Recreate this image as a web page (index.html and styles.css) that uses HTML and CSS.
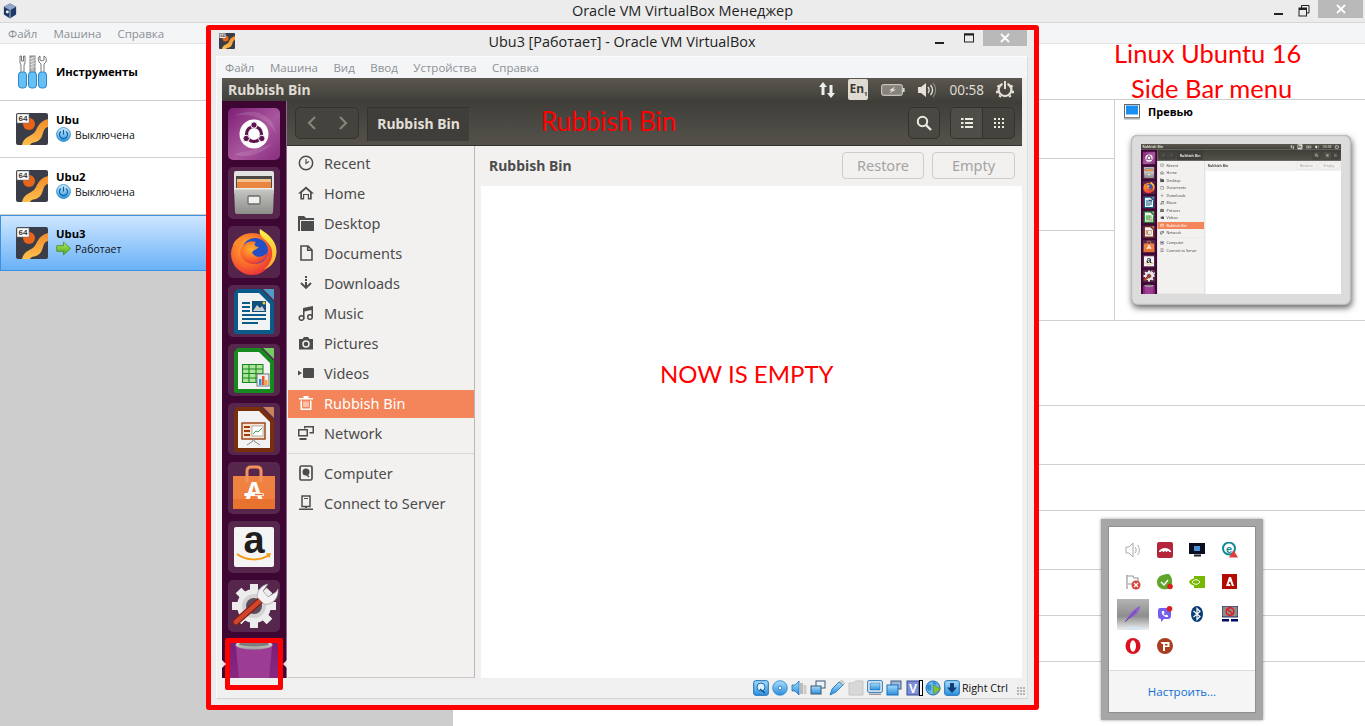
FILE: index.html
```html
<!DOCTYPE html>
<html lang="ru">
<head>
<meta charset="utf-8">
<title>Oracle VM VirtualBox Менеджер</title>
<link rel="stylesheet" href="styles.css">
</head>
<body>
<svg class="defs" aria-hidden="true">
  <defs>
    <linearGradient id="gOrange" x1="0" y1="0" x2="0" y2="1"><stop offset="0" stop-color="#f08a2c"/><stop offset="1" stop-color="#ffc04d"/></linearGradient>
    <linearGradient id="gPower" x1="0" y1="0" x2="0" y2="1"><stop offset="0" stop-color="#d4eefe"/><stop offset="1" stop-color="#2a97e0"/></linearGradient>
    <linearGradient id="gGreen" x1="0" y1="0" x2="0" y2="1"><stop offset="0" stop-color="#b8ec5e"/><stop offset="1" stop-color="#4aa51e"/></linearGradient>
    <linearGradient id="gDash" x1="0" y1="0" x2="1" y2="1"><stop offset="0" stop-color="#7d1f73"/><stop offset=".55" stop-color="#a9579f"/><stop offset="1" stop-color="#8a2c80"/></linearGradient>
    <linearGradient id="gDrawer" x1="0" y1="0" x2="0" y2="1"><stop offset="0" stop-color="#c9c9c6"/><stop offset="1" stop-color="#8d8d8a"/></linearGradient>
    <linearGradient id="gBag" x1="0" y1="0" x2="0" y2="1"><stop offset="0" stop-color="#ef8242"/><stop offset="1" stop-color="#f07f3e"/></linearGradient>
    <radialGradient id="gFox" cx=".4" cy=".35" r=".75"><stop offset="0" stop-color="#ffb52e"/><stop offset=".6" stop-color="#f9622d"/><stop offset="1" stop-color="#e2243c"/></radialGradient>
    <linearGradient id="gYellow" x1="0" y1="0" x2="0" y2="1"><stop offset="0" stop-color="#fff04a"/><stop offset="1" stop-color="#ffa92c"/></linearGradient>
    <linearGradient id="gBin" x1="0" y1="0" x2="0" y2="1"><stop offset="0" stop-color="#7c1d75"/><stop offset="1" stop-color="#8f2a86"/></linearGradient>
    <linearGradient id="gRim" x1="0" y1="0" x2="0" y2="1"><stop offset="0" stop-color="#eeeeee"/><stop offset="1" stop-color="#9a9a9a"/></linearGradient>
    <linearGradient id="gBlueIcon" x1="0" y1="0" x2="0" y2="1"><stop offset="0" stop-color="#a9dcfb"/><stop offset="1" stop-color="#2b8fdc"/></linearGradient>

    <symbol id="i-vm" viewBox="0 0 32 32">
      <rect width="32" height="32" rx="2" fill="#3a3d47"/>
      <path d="M6 32C8 24 13 24 18 20C22 16 21 9 32 6V14C27 15 28 20 25 25C21 31 16 28 14 32Z" fill="url(#gOrange)"/>
      <circle cx="13" cy="11" r="6" fill="#e8641b"/>
      <rect x="1" y="1" width="12" height="9" fill="#fff" stroke="#777" stroke-width=".6"/>
      <text x="7" y="8.4" class="svg-64">64</text>
    </symbol>
    <symbol id="i-power" viewBox="0 0 16 16">
      <circle cx="8" cy="8" r="7.4" fill="url(#gPower)" stroke="#1c7fc6" stroke-width=".8"/>
      <path d="M5.2 4.8A4.3 4.3 0 1 0 10.8 4.8M8 2.8V8" fill="none" stroke="#0e5c99" stroke-width="1.2"/>
    </symbol>
    <symbol id="i-run" viewBox="0 0 16 16">
      <path d="M8 1.2L15.5 8L8 14.8V11H.8V5H8Z" fill="url(#gGreen)" stroke="#3f8a1c" stroke-width=".8"/>
    </symbol>
    <symbol id="i-tools" viewBox="0 0 30 34">
      <path d="M3 1H4.5V6H6.5V1H8V8L7 10V18H4V10L3 8Z" fill="#fff" stroke="#555" stroke-width=".8"/>
      <rect x="13" y="1" width="5" height="17" fill="#bbb" stroke="#666" stroke-width=".8"/>
      <path d="M13 4L18 2M13 7L18 5M13 10L18 8M13 13L18 11" stroke="#eee" stroke-width=".8"/>
      <path d="M23 1V5L25 6L27 5V1C29 2 30 4 29 7L27 9V18H24V9L22 7C21 4 21 2 23 1Z" fill="#fff" stroke="#555" stroke-width=".8"/>
      <rect x="1.500" y="17" width="8" height="16" rx="3" fill="#67c0f5" stroke="#2a86c9"/>
      <rect x="11.500" y="17" width="8" height="16" rx="3" fill="#67c0f5" stroke="#2a86c9"/>
      <rect x="21.500" y="17" width="8" height="16" rx="3" fill="#67c0f5" stroke="#2a86c9"/>
    </symbol>
    <symbol id="i-hostlogo" viewBox="0 0 16 18">
      <path d="M8 .5L15 4V13L8 17.500L1 13V4Z" fill="#1f3a68"/>
      <path d="M8 .5L15 4L8 8L1 4Z" fill="#8fa6c8"/>
      <path d="M8 8V17.500" stroke="#c7d3e6" stroke-width="1"/>
      <circle cx="5" cy="10" r="1.600" fill="#fff"/>
    </symbol>
    <symbol id="i-min" viewBox="0 0 12 12"><rect x="1" y="8" width="9" height="2" fill="currentColor"/></symbol>
    <symbol id="i-max" viewBox="0 0 12 12"><rect x="1.500" y="2" width="9" height="8" fill="none" stroke="currentColor"/><rect x="1" y="1.500" width="10" height="2" fill="currentColor"/></symbol>
    <symbol id="i-restore" viewBox="0 0 12 12"><path d="M3.500 3V.5H11V8H8.500" fill="none" stroke="currentColor"/><rect x="1" y="3" width="7.500" height="8" fill="none" stroke="currentColor"/><rect x="1" y="3" width="7.500" height="2" fill="currentColor"/></symbol>
    <symbol id="i-close" viewBox="0 0 12 12"><path d="M2 2L10 10M10 2L2 10" stroke="currentColor" stroke-width="1.800"/></symbol>

    <symbol id="p-net" viewBox="0 0 18 18"><path d="M5 1L9 6H6.500V14H3.500V6H1ZM13 17L9 12H11.500V4H14.500V12H17Z" fill="#eee"/></symbol>
    <symbol id="p-bat" viewBox="0 0 24 14"><rect x=".7" y="1.700" width="20.600" height="10.600" rx="1.500" fill="#85837b" stroke="#dfdbd2"/><rect x="22" y="5" width="1.600" height="4" fill="#dfdbd2"/><path d="M14 3.500L8 7.500L11 7.500L8 10.500L15 6.500L12 6.500Z" fill="#e8e5dd"/></symbol>
    <symbol id="p-vol" viewBox="0 0 20 18"><path d="M1 6H4L9 2V16L4 12H1Z" fill="#e5e1d8"/><path d="M11 6C12.500 8 12.500 10 11 12M13.500 4C16 7 16 11 13.500 14" fill="none" stroke="#e5e1d8" stroke-width="1.300"/><path d="M16 2C19.500 6 19.500 12 16 16" fill="none" stroke="#8b8880" stroke-width="1.200"/></symbol>
    <symbol id="p-gear" viewBox="0 0 18 18"><path d="M6.200 1.800A7.500 7.500 0 1 0 11.800 1.800L11.200 4A5.200 5.200 0 1 1 6.800 4Z" fill="#e5e1d8"/><rect x="8" y="0" width="2" height="8" fill="#e5e1d8"/><path d="M1.500 4.500L3 6M16.500 4.500L15 6M0 11H2M18 11H16M3.500 16L4.500 14.500M14.500 16L13.500 14.500" stroke="#e5e1d8" stroke-width="2.400"/></symbol>
    <symbol id="t-back" viewBox="0 0 12 16"><path d="M9 2L3 8L9 14" fill="none" stroke="currentColor" stroke-width="2"/></symbol>
    <symbol id="t-fwd" viewBox="0 0 12 16"><path d="M3 2L9 8L3 14" fill="none" stroke="currentColor" stroke-width="2"/></symbol>
    <symbol id="t-search" viewBox="0 0 16 16"><circle cx="6.500" cy="6.500" r="4.700" fill="none" stroke="#eeeae2" stroke-width="2"/><path d="M10 10L15 15" stroke="#eeeae2" stroke-width="2.400"/></symbol>
    <symbol id="t-list" viewBox="0 0 12 12"><path d="M0 1H2.500V3H0ZM4 1H12V3H4ZM0 5H2.500V7H0ZM4 5H12V7H4ZM0 9H2.500V11H0ZM4 9H12V11H4Z" fill="#eeeae2"/></symbol>
    <symbol id="t-grid" viewBox="0 0 12 12"><path d="M1 1H3V3H1ZM5 1H7V3H5ZM9 1H11V3H9ZM1 5H3V7H1ZM5 5H7V7H5ZM9 5H11V7H9ZM1 9H3V11H1ZM5 9H7V11H5ZM9 9H11V11H9Z" fill="#eeeae2"/></symbol>

    <symbol id="s-recent" viewBox="0 0 16 16"><circle cx="8" cy="8" r="6.700" fill="none" stroke="currentColor" stroke-width="1.500"/><path d="M8 4V8.500L11 6.500" fill="none" stroke="currentColor" stroke-width="1.200"/></symbol>
    <symbol id="s-home" viewBox="0 0 16 16"><path d="M8 1.500L16 8.500H13.700V14.500H9.800V10H6.200V14.500H2.300V8.500H0Z" fill="currentColor"/><path d="M8 4L12 7.500V13H11V9H5V13H4V7.500Z" fill="#f2f1f0"/></symbol>
    <symbol id="s-folder" viewBox="0 0 16 16"><path d="M0 1H6L8 3H16V16H0Z" fill="currentColor"/><path d="M2 5H16V6H3V16H2Z" fill="#f2f1f0"/></symbol>
    <symbol id="s-doc" viewBox="0 0 16 16"><path d="M3 1H10L14 5V15H3ZM9.700 1.500V5.300H13.500" fill="none" stroke="currentColor" stroke-width="1.600"/></symbol>
    <symbol id="s-down" viewBox="0 0 16 16"><path d="M7 1H9V3H7ZM7 4H9V6H7ZM7 7H9V12H7Z" fill="currentColor"/><path d="M3 8L8 13L13 8" fill="none" stroke="currentColor" stroke-width="1.800"/></symbol>
    <symbol id="s-music" viewBox="0 0 16 16"><path d="M5 3L15 1V12H13.500V5L6.500 6.400V14H5Z" fill="currentColor"/><circle cx="3.500" cy="13" r="2.300" fill="none" stroke="currentColor" stroke-width="1.500"/><circle cx="12" cy="12" r="2.300" fill="none" stroke="currentColor" stroke-width="1.500"/></symbol>
    <symbol id="s-camera" viewBox="0 0 16 16"><path d="M1 4H4.500L6 2H10L11.500 4H15V14.500H1Z" fill="currentColor"/><circle cx="8" cy="9" r="3" fill="none" stroke="#f2f1f0" stroke-width="1.500"/></symbol>
    <symbol id="s-video" viewBox="0 0 16 16"><rect x="5" y="3" width="11" height="10" rx="1" fill="currentColor"/><path d="M0 5.500L4 8L0 10.500Z" fill="currentColor"/></symbol>
    <symbol id="s-trash" viewBox="0 0 16 16"><path d="M1 3H15V4.500H1ZM5.500 1H10.500V3H5.500ZM2.500 5.500H13.500V15H2.500ZM4 5.500V13.600H12V5.500Z" fill="currentColor" fill-rule="evenodd"/><path d="M6 6.500V12M8 6.500V12M10 6.500V12" stroke="currentColor"/></symbol>
    <symbol id="s-net" viewBox="0 0 16 16"><path d="M0 4H10V11.500H0ZM1.500 5.500V10H8.500V5.500ZM1.500 13H8.500V15H1.500Z" fill="currentColor" fill-rule="evenodd"/><path d="M6 1H16V8.500H11.500V7H14.500V2.500H7.500V3.500H6Z" fill="currentColor"/></symbol>
    <symbol id="s-comp" viewBox="0 0 16 16"><rect x="2" y="1" width="12" height="14" rx="1.500" fill="none" stroke="currentColor" stroke-width="1.700"/><circle cx="8" cy="7" r="3.500" fill="currentColor"/><path d="M7 8L11 12" stroke="currentColor" stroke-width="1.500"/></symbol>
    <symbol id="s-server" viewBox="0 0 16 16"><rect x="4" y="1" width="8" height="10.500" fill="none" stroke="currentColor" stroke-width="1.500"/><path d="M6 3H10V4H6ZM7 11H9V13H7ZM1 13.500H15V15H1Z" fill="currentColor"/></symbol>

    <symbol id="l-dash" viewBox="0 0 52 52">
      <rect width="52" height="52" rx="5" fill="url(#gDash)"/>
      <path d="M6 8C24 -2 46 6 48 26C42 12 24 4 6 8ZM6 46C20 52 36 44 44 36C34 40 16 44 6 46Z" fill="#fff" opacity=".12"/>
      <circle cx="26" cy="26" r="14.500" fill="#fff"/>
      <circle cx="26" cy="26" r="7.500" fill="none" stroke="#5c154f" stroke-width="3.200"/>
      <circle cx="26" cy="17" r="3.200" fill="#5c154f" stroke="#fff"/><circle cx="18.200" cy="30.500" r="3.200" fill="#5c154f" stroke="#fff"/><circle cx="33.800" cy="30.500" r="3.200" fill="#5c154f" stroke="#fff"/>
    </symbol>
    <symbol id="l-files" viewBox="0 0 52 52">
      <rect width="52" height="52" rx="5" fill="#fff" opacity=".13"/>
      <path d="M6 6Q6 4 8 4H44Q46 4 46 6V26H6Z" fill="#e2e2e0"/>
      <rect x="8" y="9" width="36" height="16" fill="#4b4a46"/>
      <rect x="9" y="12" width="34" height="3" fill="#f4c08c"/><rect x="9" y="15" width="34" height="6" fill="#e9853f"/>
      <path d="M6 21H46L45 45Q45 47 43 47H9Q7 47 7 45Z" fill="url(#gDrawer)"/>
      <rect x="6" y="21" width="40" height="1.500" fill="#ecece9"/>
      <rect x="20" y="29" width="12" height="8" rx="1" fill="#f0f0ee" stroke="#6b6b68" stroke-width="1.300"/>
    </symbol>
    <symbol id="l-fox" viewBox="0 0 52 52">
      <rect width="52" height="52" rx="5" fill="#fff" opacity=".12"/>
      <circle cx="24" cy="28" r="21" fill="url(#gFox)"/>
      <path d="M32 3C30 10 36 12 41 18C47 25 44 38 36 43C42 42 48 36 48.500 26C49 15 40 8 32 3Z" fill="url(#gYellow)"/>
      <circle cx="27" cy="25" r="13" fill="#2450c6"/>
      <path d="M14 21C18 16 22 14 28 16C24 20 30 21 31 21C27 25 26 23 24 27C30 34 38 30 40 25C39 37 24 42 16 34C11 29 12 24 14 21Z" fill="url(#gFox)"/>
      <path d="M5 19C7 14 10 12 15 10C12 14 12 17 14 20Z" fill="#ff8a2a"/>
    </symbol>
    <symbol id="l-writer" viewBox="0 0 52 52">
      <rect width="52" height="52" rx="5" fill="#fff" opacity=".13"/>
      <path d="M8 6Q8 4 10 4H33L46 17V47Q46 49 44 49H10Q6 49 6 47V8Z" fill="#0a5a8a"/>
      <path d="M35 4H45Q46 4 46 5V15Z" fill="#4d9dc9"/>
      <path d="M10 8H31L42 19V45H10Z" fill="#f2f2f2"/>
      <path d="M14 17H22V19H14ZM14 21H22V23H14ZM14 25H22V27H14ZM14 29H38V31H14ZM14 33H38V35H14ZM14 37H30V39H14Z" fill="#0a5a8a"/>
      <rect x="24" y="16" width="14" height="11" fill="#104e7c"/><path d="M25 26L29 20L32 23L34 21L37 26Z" fill="#cfcfcf"/><circle cx="36" cy="18" r="1.500" fill="#f5c842"/>
    </symbol>
    <symbol id="l-calc" viewBox="0 0 52 52">
      <rect width="52" height="52" rx="5" fill="#fff" opacity=".13"/>
      <path d="M8 6Q8 4 10 4H33L46 17V47Q46 49 44 49H10Q6 49 6 47V8Z" fill="#168a1e"/>
      <path d="M35 4H45Q46 4 46 5V15Z" fill="#70cf62"/>
      <path d="M10 8H31L42 19V45H10Z" fill="#f2f2f2"/>
      <rect x="14" y="20" width="21" height="19" fill="#aee59a"/>
      <path d="M14.500 20V39M21 20V39M28 20V39M35 20V39M14 20.500H35M14 25H35M14 29.500H35M14 34H35M14 38.500H35" stroke="#168a1e" stroke-width="1.100"/>
      <rect x="29" y="30" width="12" height="12" fill="#eee" stroke="#777"/>
      <rect x="31" y="35" width="2.500" height="6" fill="#2c8fe0"/><rect x="34" y="32" width="2.500" height="9" fill="#e8562a"/><rect x="37" y="36" width="2.500" height="5" fill="#f2a42c"/>
    </symbol>
    <symbol id="l-impress" viewBox="0 0 52 52">
      <rect width="52" height="52" rx="5" fill="#fff" opacity=".13"/>
      <path d="M8 6Q8 4 10 4H33L46 17V47Q46 49 44 49H10Q6 49 6 47V8Z" fill="#7a2f0c"/>
      <path d="M35 4H45Q46 4 46 5V15Z" fill="#c7845a"/>
      <path d="M10 8H31L42 19V45H10Z" fill="#f2f2f2"/>
      <rect x="14" y="20" width="23" height="16" fill="#f6e3d2" stroke="#9c3d10" stroke-width="1.400"/>
      <path d="M16 23H22V25H16ZM16 27H22V29H16ZM16 31H22V33H16Z" fill="#9c3d10"/><rect x="24" y="23" width="11" height="10" fill="#fff" stroke="#888" stroke-width=".6"/><path d="M25 31L28 28L30 29L34 25" fill="none" stroke="#3aa13a"/>
      <path d="M25 36V38L19 42M26 36V38L32 42" fill="none" stroke="#888"/>
    </symbol>
    <symbol id="l-store" viewBox="0 0 52 52">
      <rect width="52" height="52" rx="5" fill="#fff" opacity=".13"/>
      <path d="M5 14H47V47H5Z" fill="url(#gBag)"/>
      <path d="M5 37H47V47H5Z" fill="#e8732f"/>
      <path d="M19 20V9Q19 5 23 5H29Q33 5 33 9V20" fill="none" stroke="#f0935e" stroke-width="3"/>
      <text x="26" y="37" class="svg-store">A</text>
      <rect x="16" y="31" width="20" height="3" rx="1.500" fill="#fff"/><rect x="27" y="31.800" width="8" height="1.400" fill="#e8732f"/>
    </symbol>
    <symbol id="l-amazon" viewBox="0 0 52 52">
      <rect width="52" height="52" rx="5" fill="#fff" opacity=".13"/>
      <rect x="6" y="6" width="40" height="40" rx="2" fill="#f4f4f4"/>
      <text x="26" y="32" class="svg-amazon">a</text>
      <path d="M9 33C18 40 32 40 41 34" fill="none" stroke="#f39a12" stroke-width="2"/><path d="M38 32.500L43 32L41.500 37Z" fill="#f39a12"/>
    </symbol>
    <symbol id="l-settings" viewBox="0 0 52 52">
      <rect width="52" height="52" rx="5" fill="#fff" opacity=".13"/>
      <path d="M26 4V48M4 26H48M10.500 10.500L41.500 41.500M41.500 10.500L10.500 41.500" stroke="#ececec" stroke-width="8"/>
      <circle cx="26" cy="26" r="17" fill="#ececec"/>
      <circle cx="26" cy="26" r="12" fill="#d2d2d2"/>
      <circle cx="26" cy="26" r="8" fill="#5e4a5a"/>
      <path d="M8 42L34 19" stroke="#7e1e12" stroke-width="7" stroke-linecap="round"/>
      <path d="M8 42L34 19" stroke="#d0452c" stroke-width="4.500" stroke-linecap="round"/>
      <path d="M40 4L35 11L40 17L48 12L50 9C51 18 44 26 36 24L29 17C29 10 34 5 40 4Z" fill="#f2f2f2" stroke="#9a9a9a" stroke-width=".7"/>
    </symbol>
    <symbol id="l-bin" viewBox="0 0 52 52">
      <rect x="2" y="4" width="48" height="48" fill="url(#gBin)"/>
      <path d="M8 8H44L40 52H12Z" fill="#9c3d93"/>
      <ellipse cx="26" cy="6" rx="18.500" ry="4.500" fill="url(#gRim)"/>
      <ellipse cx="26" cy="5" rx="15" ry="2.500" fill="#7d7d7d"/>
    </symbol>

    <symbol id="b-hd" viewBox="0 0 16 16"><rect x=".7" y=".7" width="14.600" height="14.600" rx="2" fill="url(#gBlueIcon)" stroke="#1b6fb6"/><circle cx="8" cy="7" r="4" fill="#dff1fd" stroke="#1b6fb6"/><path d="M7 9L12 13" stroke="#134f85" stroke-width="1.300"/></symbol>
    <symbol id="b-cd" viewBox="0 0 16 16"><circle cx="8" cy="8" r="7.300" fill="url(#gBlueIcon)" stroke="#2b85cf" stroke-width=".8"/><circle cx="8" cy="8" r="1.800" fill="#fff" stroke="#1b6fb6" stroke-width=".8"/></symbol>
    <symbol id="b-audio" viewBox="0 0 16 16"><path d="M1 5H4L8 1V15L4 11H1Z" fill="url(#gBlueIcon)" stroke="#1b6fb6" stroke-width=".8"/><rect x="9" y="3" width="3" height="11" fill="#bbb"/><rect x="12.500" y="5" width="3" height="9" fill="#ccc"/></symbol>
    <symbol id="b-net" viewBox="0 0 16 16"><rect x="6" y="1" width="9" height="7" fill="#e9f3fb" stroke="#40566d"/><rect x="1" y="6" width="10" height="8" fill="url(#gBlueIcon)" stroke="#40566d"/></symbol>
    <symbol id="b-usb" viewBox="0 0 16 16"><path d="M1 15L3 9L10 2L14 5L7 12Z" fill="url(#gBlueIcon)" stroke="#1b6fb6" stroke-width=".8"/><path d="M10.500 1.500L13 .7L15.500 3L14.500 5Z" fill="#ddd" stroke="#999" stroke-width=".6"/></symbol>
    <symbol id="b-shared" viewBox="0 0 16 16"><path d="M1 3H6L7.500 1H15V15H1Z" fill="#d8d8d8" stroke="#c4c4c4"/></symbol>
    <symbol id="b-disp" viewBox="0 0 16 16"><rect x=".7" y=".7" width="14.600" height="11.600" rx="1" fill="#f4f8fb" stroke="#1b6fb6"/><rect x="3" y="3" width="10" height="7" fill="url(#gBlueIcon)" stroke="#1b6fb6" stroke-width=".6"/><rect x="2" y="13.500" width="12" height="1.500" fill="#999"/></symbol>
    <symbol id="b-cap" viewBox="0 0 16 16"><rect x="5" y="1" width="10" height="8" fill="#9fb6d6" stroke="#3e5a85"/><rect x="1" y="5" width="11" height="10" fill="url(#gBlueIcon)" stroke="#1b6fb6"/></symbol>
    <symbol id="b-cpu" viewBox="0 0 16 16"><rect x="2" y="1" width="12" height="14" fill="#7e8fd6" stroke="#35489a"/><text x="8" y="12.500" class="svg-v">V</text></symbol>
    <symbol id="b-globe" viewBox="0 0 16 16"><circle cx="8" cy="8" r="7" fill="#6cb7ea" stroke="#1b6fb6"/><path d="M2 5C5 3 7 6 6 9C5 12 3 11 2 8ZM8 2C11 2 12 4 11 5L8 4Z" fill="#2d8fd0"/><path d="M8 5L15.500 9L9 14Z" fill="#86c532" stroke="#4d8f1a" stroke-width=".6"/></symbol>
    <symbol id="b-arrow" viewBox="0 0 16 16"><rect x=".7" y=".7" width="14.600" height="14.600" rx="2" fill="url(#gBlueIcon)" stroke="#1b6fb6"/><path d="M6 3H10V7.500H13L8 13L3 7.500H6Z" fill="#123c78"/></symbol>
    <symbol id="h-preview" viewBox="0 0 16 16"><rect x=".5" y=".5" width="15" height="13" fill="#fff" stroke="#666"/><rect x="2" y="1.500" width="12" height="9" fill="#1b8ff0"/><rect x="0" y="13.500" width="16" height="2" fill="#aaa"/></symbol>

    <symbol id="y-speaker" viewBox="0 0 16 16"><path d="M1 5H4L8 1V15L4 11H1Z" fill="#fff" stroke="#aaa"/><path d="M10 5C11.500 7 11.500 9 10 11M12.500 3C15 6 15 10 12.500 13" fill="none" stroke="#aaa"/></symbol>
    <symbol id="y-red" viewBox="0 0 16 16"><rect width="16" height="16" rx="2" fill="#b5263a"/><path d="M2 9C5 5 11 5 14 9V10H2Z" fill="#fff"/><circle cx="5" cy="10" r="1" fill="#b5263a"/><circle cx="8" cy="10" r="1" fill="#b5263a"/><circle cx="11" cy="10" r="1" fill="#b5263a"/></symbol>
    <symbol id="y-mon" viewBox="0 0 16 16"><rect y="1" width="16" height="11" fill="#0a0f20"/><rect x="5" y="4" width="6" height="5" fill="#4a90d9"/><rect x="5" y="12.500" width="7" height="2" fill="#222"/></symbol>
    <symbol id="y-eset" viewBox="0 0 16 16"><circle cx="7" cy="6.500" r="6" fill="none" stroke="#0f8a96" stroke-width="2"/><text x="7" y="10.500" class="svg-e">e</text><path d="M11.500 8L16 15.500H7Z" fill="#e23d3d"/></symbol>
    <symbol id="y-flag" viewBox="0 0 16 16"><path d="M2 1V15M2 2H8L9 4H13V10H3" fill="#fff" stroke="#999" stroke-width="1.200"/><circle cx="11" cy="11" r="4.500" fill="#d6453d"/><path d="M9 9L13 13M13 9L9 13" stroke="#fff" stroke-width="1.300"/></symbol>
    <symbol id="y-leaf" viewBox="0 0 16 16"><path d="M0 8C0 2 6 0 12 0C16 4 16 10 13 14C8 17 0 15 0 8Z" fill="#5ea52a"/><path d="M4 8L7 11L11 6" fill="none" stroke="#fff" stroke-width="1.500"/><circle cx="13" cy="12.500" r="2.800" fill="#e01e1e"/></symbol>
    <symbol id="y-nv" viewBox="0 0 16 16"><rect x="5" y="2" width="11" height="12" fill="#76b900"/><path d="M0 8C3 3 9 3 12 8C9 13 3 13 0 8Z" fill="#76b900"/><path d="M3 8C5 5 9 5 11 8C9 11 5 11 3 8Z" fill="none" stroke="#fff"/></symbol>
    <symbol id="y-adobe" viewBox="0 0 16 16"><rect width="15" height="15" fill="#b30b00"/><path d="M4 12L7 3H9L12 12H10L8 7L6.500 10H8L8.500 12Z" fill="#fff"/></symbol>
    <symbol id="y-feather" viewBox="0 0 16 16"><path d="M0 16C3 10 8 3 15 0C15 6 9 11 3 13Z" fill="#8f5fd0"/><path d="M0 16L11 5" stroke="#5a2c9a" stroke-width=".8"/></symbol>
    <symbol id="y-viber" viewBox="0 0 16 16"><path d="M3 2H11Q14 2 14 5V10Q14 13 11 13H7L4 16V13Q1 13 1 10V5Q1 2 3 2Z" fill="#7360f2"/><path d="M5 5L7 5L7.500 7L6.500 8L8 9.500L9 8.500L11 9.500V11C7 11.500 4 8 5 5Z" fill="#fff"/><circle cx="12.500" cy="2.800" r="2.800" fill="#e01e1e"/></symbol>
    <symbol id="y-bt" viewBox="0 0 16 16"><ellipse cx="8" cy="8" rx="6" ry="8" fill="#0a3d76"/><path d="M4.500 5L11 10.500L8 13.500V2.500L11 5.500L4.500 11" fill="none" stroke="#fff" stroke-width="1.200"/></symbol>
    <symbol id="y-nonet" viewBox="0 0 16 16"><rect width="16" height="11" fill="#8d8d8d" stroke="#000a60" stroke-width=".8"/><circle cx="8" cy="5.500" r="3.800" fill="none" stroke="#e21a1a" stroke-width="1.500"/><path d="M5 3L11 8" stroke="#e21a1a" stroke-width="1.500"/><rect y="13" width="7" height="2.500" fill="#000a60"/><rect x="9" y="13" width="7" height="2.500" fill="#000a60"/></symbol>
    <symbol id="y-opera" viewBox="0 0 16 16"><ellipse cx="8" cy="8" rx="7.500" ry="8" fill="#d8101f"/><ellipse cx="8" cy="8" rx="3" ry="5.800" fill="#fff"/></symbol>
    <symbol id="y-p" viewBox="0 0 16 16"><circle cx="8" cy="8" r="8" fill="#a83d1f"/><path d="M3.500 4H12.500V9H8V13H6V6H5Z" fill="#fff"/><rect x="8" y="6" width="2.500" height="1.500" fill="#a83d1f"/></symbol>
  </defs>
</svg>

<div class="host">
  <header class="host-title">
    <svg class="host-logo"><use href="#i-hostlogo"/></svg>
    <span class="host-title-text">Oracle VM VirtualBox Менеджер</span>
    <div class="wincontrols">
      <svg class="wc wc-min"><use href="#i-min"/></svg>
      <svg class="wc wc-res"><use href="#i-restore"/></svg>
      <span class="wc-close"><svg class="wc"><use href="#i-close"/></svg></span>
    </div>
  </header>
  <nav class="menubar host-menu"><span>Файл</span><span>Машина</span><span>Справка</span></nav>
  <main class="host-body">
    <section class="vm-list">
      <div class="vm-row tools-row">
        <svg class="tools-icon"><use href="#i-tools"/></svg>
        <b class="vm-name">Инструменты</b>
      </div>
      <div class="vm-row">
        <svg class="vm-icon"><use href="#i-vm"/></svg>
        <div class="vm-info"><b class="vm-name">Ubu</b><span class="vm-state"><svg class="state-icon"><use href="#i-power"/></svg>Выключена</span></div>
      </div>
      <div class="vm-row">
        <svg class="vm-icon"><use href="#i-vm"/></svg>
        <div class="vm-info"><b class="vm-name">Ubu2</b><span class="vm-state"><svg class="state-icon"><use href="#i-power"/></svg>Выключена</span></div>
      </div>
      <div class="vm-row vm-selected">
        <svg class="vm-icon"><use href="#i-vm"/></svg>
        <div class="vm-info"><b class="vm-name">Ubu3</b><span class="vm-state"><svg class="state-icon"><use href="#i-run"/></svg>Работает</span></div>
      </div>
    </section>
    <section class="details">
      <div class="band band-top"></div>
      <div class="band-split">
        <div class="split-left">
          <div class="band band-59"></div>
          <div class="band band-72"></div>
        </div>
        <div class="preview">
          <h2 class="preview-head"><svg class="preview-icon"><use href="#h-preview"/></svg>Превью</h2>
          <div class="thumb">
            <div class="thumb-screen">
              <div class="thumb-scale">
                <div class="guest">
                  <div class="gpanel">
                    <b class="gpanel-title">Rubbish Bin</b>
                    <div class="gpanel-right">
                      <svg class="p-net"><use href="#p-net"/></svg><span class="p-en">En<sub>1</sub></span><svg class="p-bat"><use href="#p-bat"/></svg><svg class="p-vol"><use href="#p-vol"/></svg><span class="p-time">00:58</span><svg class="p-gear"><use href="#p-gear"/></svg>
                    </div>
                  </div>
                  <div class="gbody">
                    <div class="launcher">
                      <svg class="tile"><use href="#l-dash"/></svg><svg class="tile"><use href="#l-files"/></svg><svg class="tile"><use href="#l-fox"/></svg><svg class="tile"><use href="#l-writer"/></svg><svg class="tile"><use href="#l-calc"/></svg><svg class="tile"><use href="#l-impress"/></svg><svg class="tile"><use href="#l-store"/></svg><svg class="tile"><use href="#l-amazon"/></svg><svg class="tile"><use href="#l-settings"/></svg><svg class="tile"><use href="#l-bin"/></svg>
                    </div>
                    <div class="gmain">
                      <div class="gtoolbar">
                        <div class="navgroup"><svg class="nav-a"><use href="#t-back"/></svg><svg class="nav-a"><use href="#t-fwd"/></svg></div>
                        <b class="crumb">Rubbish Bin</b>
                        <span class="gspacer"></span>
                        <span class="tbtn"><svg class="t-ic"><use href="#t-search"/></svg></span>
                        <div class="viewgroup"><span class="vb vb-on"><svg class="t-ic12"><use href="#t-list"/></svg></span><span class="vb"><svg class="t-ic12"><use href="#t-grid"/></svg></span></div>
                      </div>
                      <div class="gpane">
                        <ul class="places">
                          <li><svg class="pl"><use href="#s-recent"/></svg>Recent</li><li><svg class="pl"><use href="#s-home"/></svg>Home</li><li><svg class="pl"><use href="#s-folder"/></svg>Desktop</li><li><svg class="pl"><use href="#s-doc"/></svg>Documents</li><li><svg class="pl"><use href="#s-down"/></svg>Downloads</li><li><svg class="pl"><use href="#s-music"/></svg>Music</li><li><svg class="pl"><use href="#s-camera"/></svg>Pictures</li><li><svg class="pl"><use href="#s-video"/></svg>Videos</li><li class="pl-on"><svg class="pl"><use href="#s-trash"/></svg>Rubbish Bin</li><li class="pl-sep"><svg class="pl"><use href="#s-net"/></svg>Network</li><li><svg class="pl"><use href="#s-comp"/></svg>Computer</li><li><svg class="pl"><use href="#s-server"/></svg>Connect to Server</li>
                        </ul>
                        <div class="gcontent">
                          <div class="ghead"><b class="ghead-title">Rubbish Bin</b><span class="gbtn gbtn-r">Restore</span><span class="gbtn gbtn-e">Empty</span></div>
                          <div class="gwhite"></div>
                        </div>
                      </div>
                    </div>
                  </div>
                </div>
              </div>
            </div>
          </div>
        </div>
      </div>
      <div class="band band-85"></div>
      <div class="band band-59"></div>
      <div class="band band-46"></div>
      <div class="band band-59"></div>
      <div class="band band-46"></div>
      <div class="band band-46"></div>
    </section>
  </main>

  <div class="vm-window">
    <header class="vm-title">
      <svg class="vm-title-icon"><use href="#i-vm"/></svg>
      <span class="vm-title-text">Ubu3 [Работает] - Oracle VM VirtualBox</span>
      <div class="wincontrols vm-controls">
        <svg class="wc wc-min2"><use href="#i-min"/></svg>
        <svg class="wc wc-max2"><use href="#i-max"/></svg>
        <span class="wc-close wc-close2"><svg class="wc"><use href="#i-close"/></svg></span>
      </div>
    </header>
    <div class="vm-frame">
      <nav class="menubar vm-menu"><span>Файл</span><span>Машина</span><span>Вид</span><span>Ввод</span><span>Устройства</span><span>Справка</span></nav>
      <div class="guest-wrap">
        <div class="guest">
          <div class="gpanel">
            <b class="gpanel-title">Rubbish Bin</b>
            <div class="gpanel-right">
              <svg class="p-net"><use href="#p-net"/></svg><span class="p-en">En<sub>1</sub></span><svg class="p-bat"><use href="#p-bat"/></svg><svg class="p-vol"><use href="#p-vol"/></svg><span class="p-time">00:58</span><svg class="p-gear"><use href="#p-gear"/></svg>
            </div>
          </div>
          <div class="gbody">
            <div class="launcher">
              <svg class="tile"><use href="#l-dash"/></svg><svg class="tile"><use href="#l-files"/></svg><svg class="tile"><use href="#l-fox"/></svg><svg class="tile"><use href="#l-writer"/></svg><svg class="tile"><use href="#l-calc"/></svg><svg class="tile"><use href="#l-impress"/></svg><svg class="tile"><use href="#l-store"/></svg><svg class="tile"><use href="#l-amazon"/></svg><svg class="tile"><use href="#l-settings"/></svg><svg class="tile"><use href="#l-bin"/></svg>
            </div>
            <div class="gmain">
              <div class="gtoolbar">
                <div class="navgroup"><svg class="nav-a"><use href="#t-back"/></svg><svg class="nav-a"><use href="#t-fwd"/></svg></div>
                <b class="crumb">Rubbish Bin</b>
                <span class="gspacer"></span>
                <span class="tbtn"><svg class="t-ic"><use href="#t-search"/></svg></span>
                <div class="viewgroup"><span class="vb vb-on"><svg class="t-ic12"><use href="#t-list"/></svg></span><span class="vb"><svg class="t-ic12"><use href="#t-grid"/></svg></span></div>
              </div>
              <div class="gpane">
                <ul class="places">
                  <li><svg class="pl"><use href="#s-recent"/></svg>Recent</li><li><svg class="pl"><use href="#s-home"/></svg>Home</li><li><svg class="pl"><use href="#s-folder"/></svg>Desktop</li><li><svg class="pl"><use href="#s-doc"/></svg>Documents</li><li><svg class="pl"><use href="#s-down"/></svg>Downloads</li><li><svg class="pl"><use href="#s-music"/></svg>Music</li><li><svg class="pl"><use href="#s-camera"/></svg>Pictures</li><li><svg class="pl"><use href="#s-video"/></svg>Videos</li><li class="pl-on"><svg class="pl"><use href="#s-trash"/></svg>Rubbish Bin</li><li class="pl-sep"><svg class="pl"><use href="#s-net"/></svg>Network</li><li><svg class="pl"><use href="#s-comp"/></svg>Computer</li><li><svg class="pl"><use href="#s-server"/></svg>Connect to Server</li>
                </ul>
                <div class="gcontent">
                  <div class="ghead"><b class="ghead-title">Rubbish Bin</b><span class="gbtn gbtn-r">Restore</span><span class="gbtn gbtn-e">Empty</span></div>
                  <div class="gwhite"></div>
                </div>
              </div>
            </div>
          </div>
        </div>
      </div>
      <footer class="vm-status">
        <svg class="st"><use href="#b-hd"/></svg><svg class="st"><use href="#b-cd"/></svg><svg class="st"><use href="#b-audio"/></svg><svg class="st"><use href="#b-net"/></svg><svg class="st"><use href="#b-usb"/></svg><svg class="st"><use href="#b-shared"/></svg><svg class="st"><use href="#b-disp"/></svg><svg class="st"><use href="#b-cap"/></svg><svg class="st"><use href="#b-cpu"/></svg><span class="st-bar"></span><svg class="st"><use href="#b-globe"/></svg><svg class="st"><use href="#b-arrow"/></svg><span class="st-key">Right Ctrl</span><span class="grip"></span>
      </footer>
    </div>
  </div>

  <span class="trash-mark"></span>
  <span class="launcher-tick tick-l"></span>
  <span class="launcher-tick tick-r"></span>
  <span class="note note-bin">Rubbish Bin</span>
  <span class="note note-empty">NOW IS EMPTY</span>
  <div class="note note-linux"><span>Linux Ubuntu 16</span><span class="note-linux2">Side Bar menu</span></div>

  <aside class="tray">
    <div class="tray-grid">
      <svg class="ty"><use href="#y-speaker"/></svg><svg class="ty"><use href="#y-red"/></svg><svg class="ty"><use href="#y-mon"/></svg><svg class="ty"><use href="#y-eset"/></svg>
      <svg class="ty"><use href="#y-flag"/></svg><svg class="ty"><use href="#y-leaf"/></svg><svg class="ty"><use href="#y-nv"/></svg><svg class="ty"><use href="#y-adobe"/></svg>
      <span class="ty-hot"><svg class="ty"><use href="#y-feather"/></svg></span><svg class="ty"><use href="#y-viber"/></svg><svg class="ty"><use href="#y-bt"/></svg><svg class="ty"><use href="#y-nonet"/></svg>
      <svg class="ty"><use href="#y-opera"/></svg><svg class="ty"><use href="#y-p"/></svg>
    </div>
    <footer class="tray-foot">Настроить...</footer>
  </aside>
</div>
</body>
</html>
```
FILE: styles.css
```css
* { box-sizing: border-box; }
html, body { margin: 0; padding: 0; }
body { width: 1365px; height: 726px; overflow: hidden; font-family: "Open Sans", "Noto Sans", sans-serif; background: #fff; color: #000; }
.defs { position: absolute; width: 0; height: 0; }
svg { display: block; flex: none; }
.svg-64 { font: 700 8px "Liberation Sans", sans-serif; text-anchor: middle; fill: #333; }
.svg-store { font: 700 24px "Noto Sans", sans-serif; text-anchor: middle; fill: #fff; }
.svg-amazon { font: 700 38px "Liberation Sans", sans-serif; text-anchor: middle; fill: #1e1e1e; }
.svg-v { font: 700 12px "Liberation Sans", sans-serif; text-anchor: middle; fill: #fff; }
.svg-e { font: 700 11px "Liberation Sans", sans-serif; text-anchor: middle; fill: #0f8a96; }

.host { position: relative; width: 1365px; height: 726px; display: flex; flex-direction: column; overflow: hidden; }
.host-title { height: 23px; flex: none; background: #ececec; border-bottom: 1px solid #d6d6d6; display: grid; grid-template-columns: 1fr auto 1fr; align-items: center; }
.host-logo { width: 14px; height: 16px; margin: 0 0 1px 3px; }
.host-title-text { font-size: 14.5px; color: #1f1f1f; line-height: 22px; }
.wincontrols { justify-self: end; display: flex; align-self: start; align-items: flex-start; color: #222; }
.wc { width: 12px; height: 12px; }
.wc-min { margin: 5px 13px 0 0; }
.wc-res { margin: 5px 8px 0 0; }
.wc-close { width: 45px; height: 18px; background: #b9b9b9; color: #fff; display: flex; align-items: center; justify-content: center; margin-right: 2px; }

.menubar { display: flex; background: #f4f5f7; font-size: 11.500px; color: #8d9196; }
.host-menu { height: 21px; flex: none; border-bottom: 1px solid #e2e2e2; padding-left: 8px; gap: 16px; align-items: center; }

.host-body { flex: 1; display: flex; min-height: 0; }
.vm-list { width: 453px; flex: none; background: #cdcdcd; }
.vm-row { height: 57px; background: #fff; border-bottom: 1px solid #d0d0d0; display: flex; align-items: center; padding-left: 16px; gap: 8px; }
.tools-row { padding-left: 17px; }
.tools-icon { width: 30px; height: 34px; margin-right: 1px; margin-top: -1px; }
.vm-icon { width: 32px; height: 32px; }
.vm-info { display: flex; flex-direction: column; gap: 0; margin-top: -3px; }
.vm-name { font-size: 11.300px; line-height: 14px; color: #000; }
.vm-state { display: flex; align-items: center; gap: 4px; font-size: 10.500px; line-height: 16px; color: #111; }
.state-icon { width: 15px; height: 15px; }
.vm-selected { height: 56px; border: 1px solid #3d8fe0; padding-left: 15px; background: linear-gradient(#cfe7ff, #69b1f8); }

.details { flex: 1; display: flex; flex-direction: column; min-width: 0; }
.band { border-bottom: 1px solid #d0d0d0; flex: none; }
.band-top { height: 56px; }
.band-59 { height: 59px; }
.band-72 { height: 72px; }
.band-85 { height: 85px; }
.band-46 { height: 46px; }
.band-split { height: 221px; flex: none; display: flex; border-bottom: 1px solid #d0d0d0; }
.split-left { width: 662px; flex: none; border-right: 1px solid #d0d0d0; }
.preview { flex: 1; padding: 4px 0 0 9px; }
.preview-head { margin: 0; display: flex; align-items: center; gap: 8px; font-size: 11px; font-weight: 700; line-height: 16px; }
.preview-icon { width: 16px; height: 16px; }
.thumb { width: 220px; height: 170px; margin: 15px 0 0 7px; padding: 9px 10px; background: #dcdcdc; border-radius: 6px; box-shadow: 1px 3px 6px rgba(0,0,0,.6), inset 0 0 2px #666; }
.thumb-screen { width: 200px; height: 151px; overflow: hidden; }
.thumb-scale { width: 800px; height: 600px; transform: scale(.25); transform-origin: 0 0; filter: blur(1.400px); }

.vm-window { position: absolute; left: 206px; top: 25px; width: 833px; height: 685px; border: 5px solid #f00; border-radius: 3px; background: #ececec; display: flex; flex-direction: column; }
.vm-title { height: 26px; flex: none; position: relative; display: flex; align-items: center; justify-content: center; }
.vm-title-icon { width: 16px; height: 16px; position: absolute; left: 8px; top: 3px; }
.vm-title-text { font-size: 14.400px; color: #222; margin-left: -1px; margin-top: -4px; }
.vm-controls { position: absolute; right: 7px; top: 0; }
.wc-min2 { margin: 4px 17px 0 0; }
.wc-max2 { margin: 2px 8px 0 0; }
.wc-close2 { width: 44px; height: 16px; margin-right: 0; }
.vm-frame { width: 812px; height: 643px; margin-left: 5px; border: 1px solid #fafafa; border-right-color: #dedede; border-bottom-color: #d4d4d4; display: flex; flex-direction: column; background: #f0f0f0; }
.vm-menu { height: 21px; flex: none; padding-left: 8px; gap: 0; align-items: center; }
.vm-menu span { margin-right: 15.500px; }
.guest-wrap { flex: none; padding-left: 5px; }
.guest { width: 800px; height: 600px; display: flex; flex-direction: column; overflow: hidden; background: #f2f1f0; }
.gpanel { height: 23px; flex: none; background: linear-gradient(#5b574f, #403f3a); display: flex; align-items: center; padding-left: 6px; }
.gpanel-title { font: 700 14px "Noto Sans", sans-serif; color: #dfdbd2; }
.gpanel-right { margin-left: auto; display: flex; align-items: center; }
.p-net { width: 18px; height: 18px; margin-right: 12px; }
.p-en { width: 20px; height: 21px; background: #dfdbd2; color: #3c3b37; border-radius: 2px; font: 700 12px/20px "Noto Sans", sans-serif; text-align: center; margin-right: 13px; }
.p-en sub { font-size: 6px; line-height: 0; }
.p-bat { width: 24px; height: 14px; margin-right: 12px; }
.p-vol { width: 20px; height: 18px; margin-right: 12px; }
.p-time { font: 400 13.500px "Noto Sans", sans-serif; color: #dfdbd2; margin-right: 12px; }
.p-gear { width: 18px; height: 18px; margin-right: 8px; }
.gbody { flex: 1; display: flex; min-height: 0; }
.launcher { width: 65px; flex: none; background: #3d0633; border-right: 1px solid #8b6b88; padding: 7px 0 0 6px; display: flex; flex-direction: column; gap: 7px; overflow: hidden; }
.tile { width: 52px; height: 52px; }
.gmain { flex: 1; display: flex; flex-direction: column; min-width: 0; }
.gtoolbar { height: 45px; flex: none; background: linear-gradient(#3f3e39, #55524b); border-bottom: 1px solid #33322e; display: flex; align-items: flex-start; padding: 6px 7px 0 8px; }
.navgroup { width: 64px; height: 32px; border: 1px solid #33322e; border-radius: 5px; background: #45433e; display: flex; align-items: center; justify-content: space-around; color: #88867f; }
.nav-a { width: 12px; height: 16px; }
.crumb { width: 102px; height: 34px; margin-left: 8px; background: #3f3e3a; border-top: 1px solid #33322e; border-left: 1px solid #33322e; font: 700 14px/32px "Noto Sans", sans-serif; color: #e2dfd8; text-align: center; }
.gspacer { flex: 1; }
.tbtn { width: 32px; height: 32px; border: 1px solid #33322e; border-radius: 5px; background: #4a4842; display: flex; align-items: center; justify-content: center; margin-right: 10px; }
.t-ic { width: 16px; height: 16px; }
.t-ic12 { width: 12px; height: 12px; }
.viewgroup { width: 65px; height: 32px; border: 1px solid #33322e; border-radius: 5px; background: #45433e; display: flex; overflow: hidden; }
.vb { flex: 1; display: flex; align-items: center; justify-content: center; }
.vb-on { background: #4f4d47; border-right: 1px solid #33322e; }
.gpane { flex: 1; display: flex; min-height: 0; }
.places { list-style: none; margin: 0; padding: 4px 0 0; width: 188px; flex: none; background: #f2f1f0; border-right: 1px solid #b8b8b8; border-left: 1px solid #f2f1f0; border-bottom: 1px solid #c9c9c9; }
.places li { height: 28px; margin-bottom: 2px; padding: 0 0 2px 10px; display: flex; align-items: center; gap: 10px; font: 400 14.500px "Noto Sans", sans-serif; color: #4c4c4c; }
.pl { width: 16px; height: 16px; }
.places .pl-on { background: #f4855a; color: #fff; }
.places .pl-sep { position: relative; margin-bottom: 12px; }
.places .pl-sep::after { content: ""; position: absolute; left: 0; right: 0; bottom: -6px; height: 1px; background: #dcdad8; }
.gcontent { flex: 1; display: flex; flex-direction: column; min-width: 0; }
.ghead { height: 40px; flex: none; display: flex; align-items: center; padding: 0 7px 2px 14px; gap: 8px; }
.ghead-title { font: 700 14px "Noto Sans", sans-serif; color: #4c4c4c; margin-right: auto; }
.gbtn { height: 27px; border: 1px solid #cfcdca; border-radius: 4px; font: 400 14.500px/25px "Noto Sans", sans-serif; color: #a5a3a1; text-align: center; background: #f2f1f0; }
.gbtn-r { width: 82px; }
.gbtn-e { width: 83px; }
.gwhite { flex: 1; background: #fff; margin-left: 6px; }

.vm-status { flex: 1; display: flex; align-items: center; padding: 0 0 1px 536px; }
.st { width: 16px; height: 16px; margin-right: 3px; }
.st-bar { width: 4px; height: 16px; border: 1px solid #000; background: #fff; margin: 0 2px 0 -5px; }
.st-key { font-size: 10.700px; color: #111; white-space: nowrap; margin-left: -1px; }
.grip { width: 8px; height: 8px; margin: 6px 0 0 9px; background: radial-gradient(circle at 1px 1px, #b5b5b5 1px, transparent 1.200px) 0 0 / 3px 3px; }

.trash-mark { position: absolute; left: 225px; top: 638px; width: 58px; height: 52px; border: 5px solid #f00; border-radius: 2px; }
.launcher-tick { position: absolute; top: 660px; width: 0; height: 0; border-top: 4px solid transparent; border-bottom: 4px solid transparent; }
.tick-l { left: 222px; border-left: 4px solid #e4e4e4; }
.tick-r { left: 283px; border-right: 4px solid #e4e4e4; }
.note { position: absolute; color: #f00; font-family: Lato, "Open Sans", sans-serif; white-space: nowrap; }
.note-bin { left: 541px; top: 105px; font-size: 26px; line-height: 32px; }
.note-empty { left: 660px; top: 358px; font-size: 24px; line-height: 32px; }
.note-linux { left: 1114px; top: 36px; display: flex; flex-direction: column; font-size: 25.500px; line-height: 35px; }
.note-linux2 { padding-left: 17px; }

.tray { position: absolute; left: 1101px; top: 519px; width: 162px; height: 201px; background: #fff; border: 7px solid #a6a6a6; outline: 1px solid #8f8f8f; outline-offset: -8px; box-shadow: 0 0 3px rgba(0,0,0,.4); display: flex; flex-direction: column; }
.tray-grid { flex: 1; display: grid; grid-template-columns: repeat(4, 32.200px); grid-auto-rows: 32px; justify-items: center; align-items: center; padding: 8px 0 0 9px; align-content: start; }
.ty { width: 16px; height: 16px; }
.ty-hot { width: 32px; height: 31px; background: radial-gradient(ellipse 14px 5px at 50% 100%, #cfe6fb, transparent), linear-gradient(#b4b4b4, #8e8e8e 55%, #f0f0f0); display: flex; align-items: center; justify-content: center; }
.tray-foot { height: 43px; flex: none; background: #f5f5f5; border-top: 1px solid #dcdcdc; font-size: 11.500px; line-height: 42px; text-align: center; color: #0f6fd6; }
```
